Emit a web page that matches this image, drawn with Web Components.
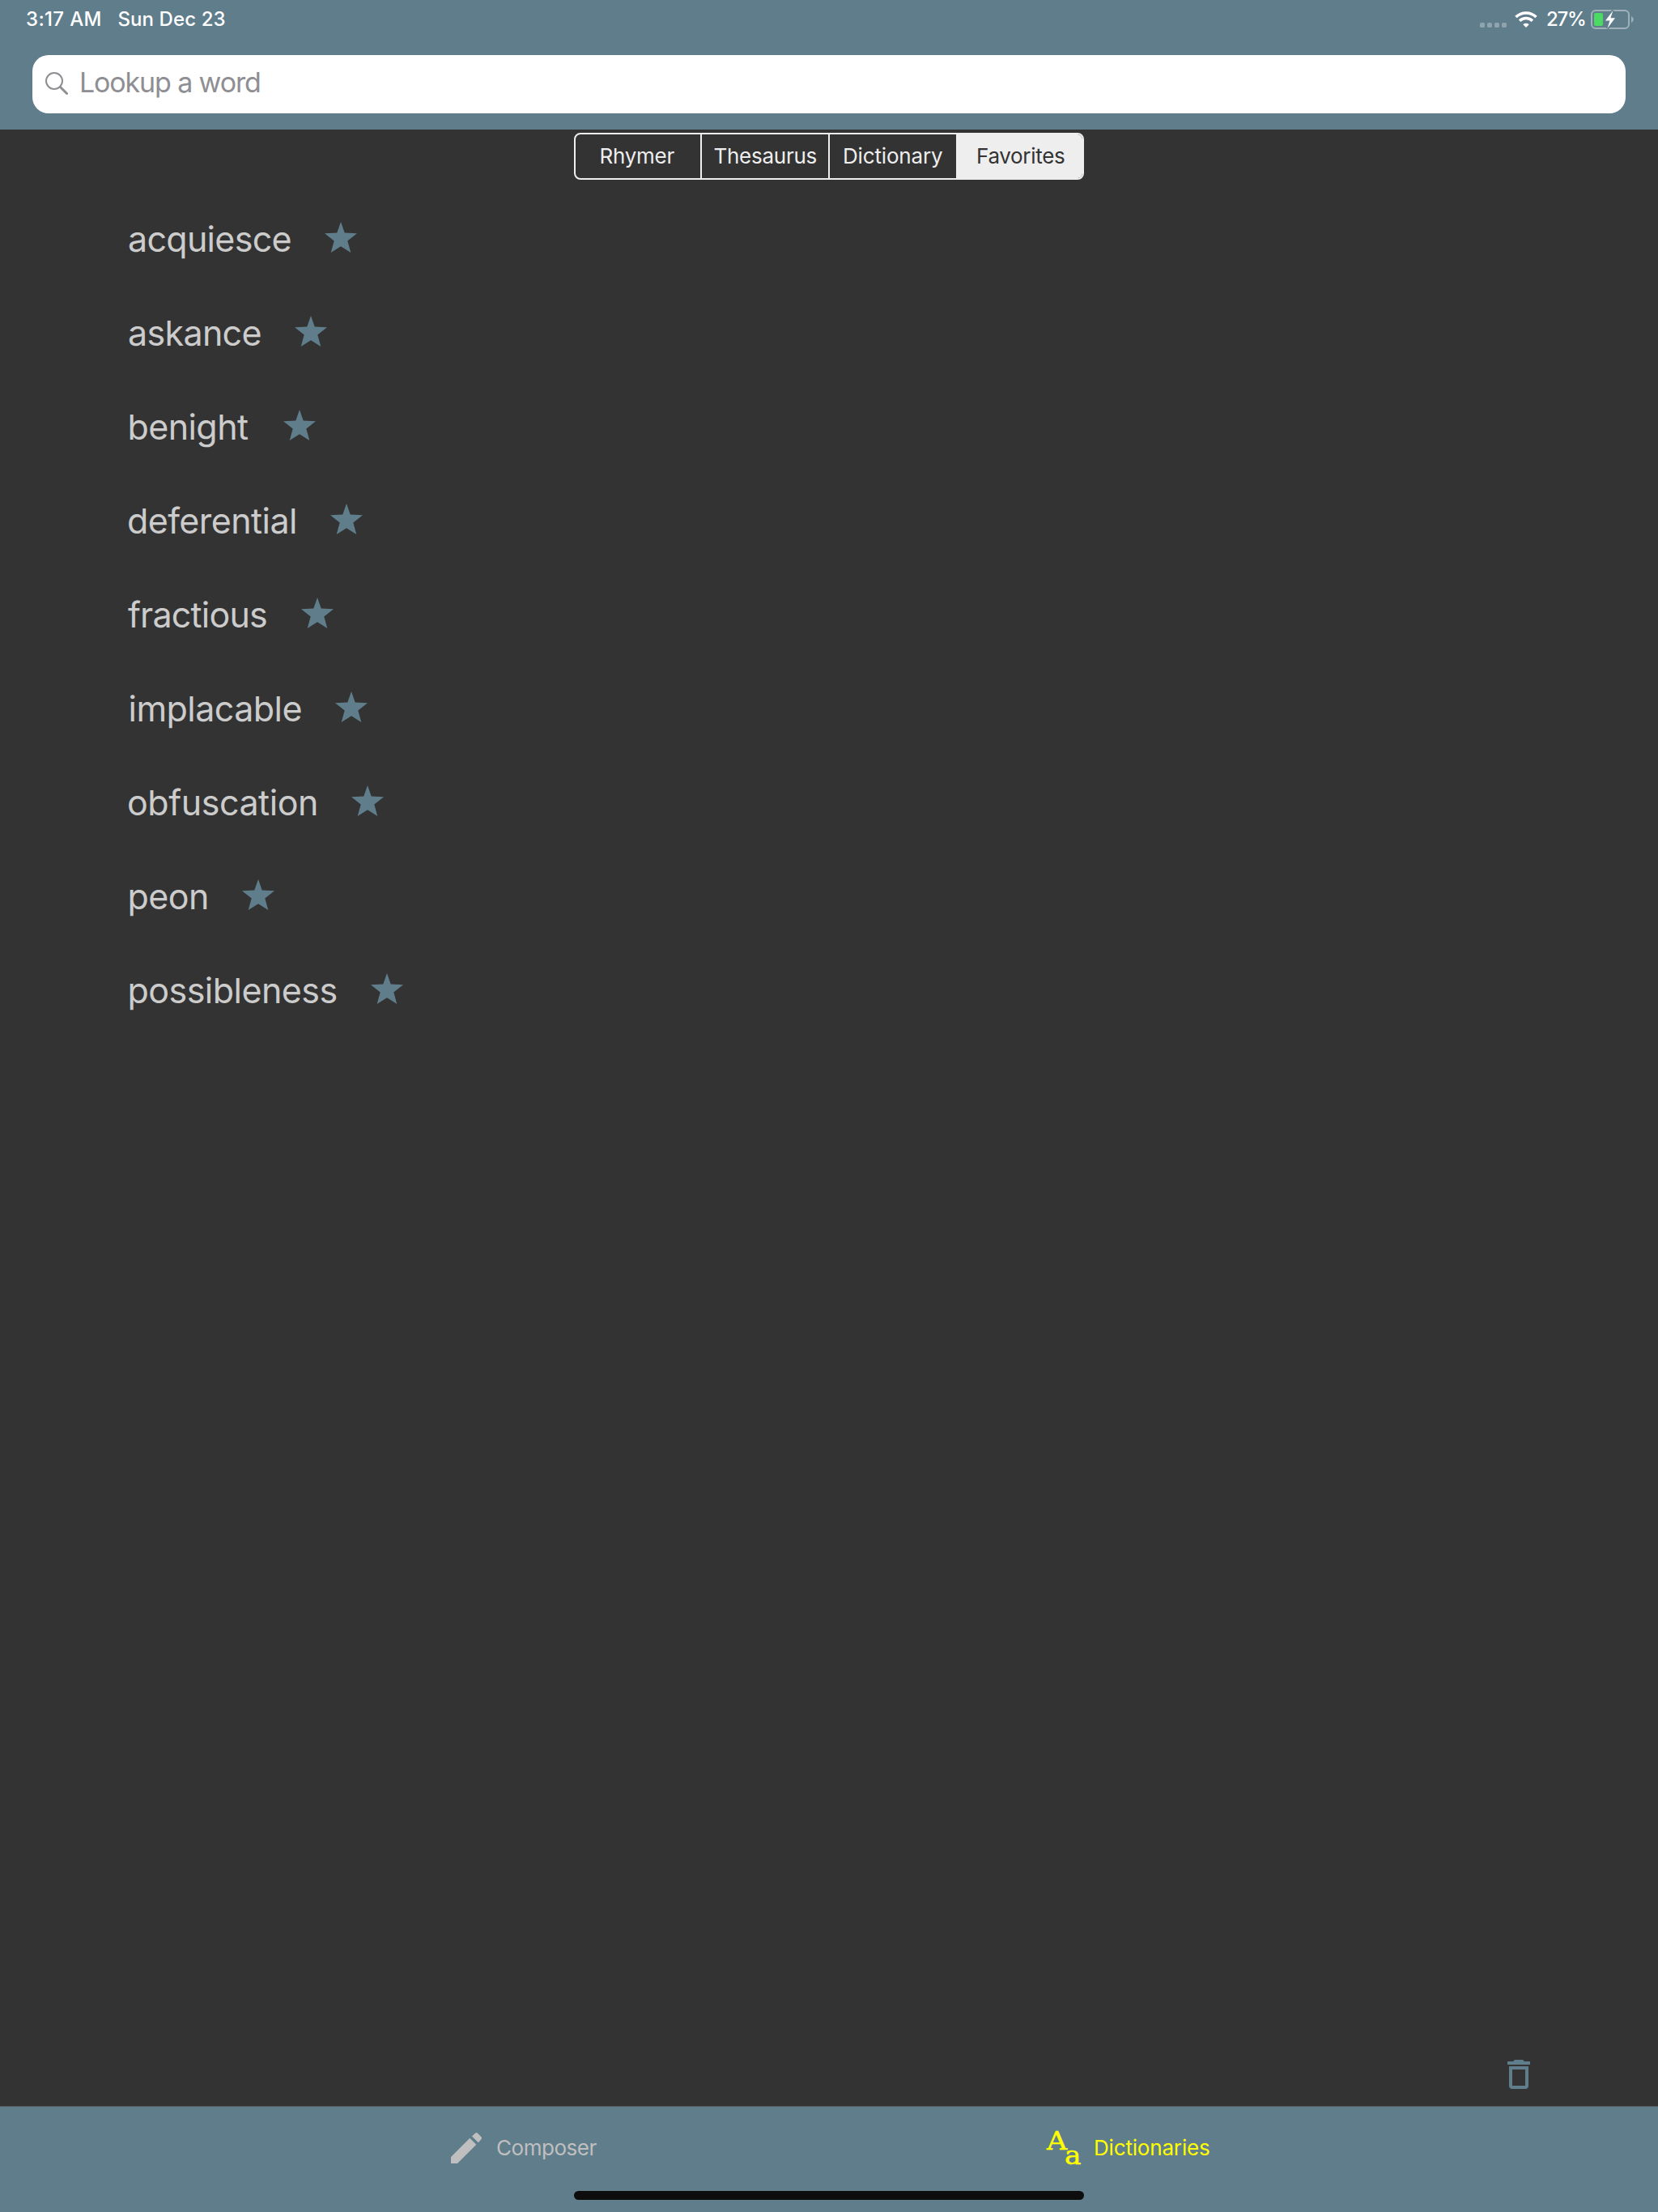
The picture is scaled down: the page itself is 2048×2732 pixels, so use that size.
<!DOCTYPE html>
<html lang="en">
<head>
<meta charset="utf-8">
<title>Favorites</title>
<style>
html, body { margin: 0; height: 100%; }
body { font-family: Inter, "Liberation Sans", sans-serif; background: #333; }
</style>
</head>
<body>
<favorites-app></favorites-app>
<script>
const define = (name, html, setup) => customElements.define(name, class extends HTMLElement {
  connectedCallback() {
    if (this.shadowRoot) return;
    const t = document.createElement('template');
    t.innerHTML = html;
    this.attachShadow({ mode: 'open' }).append(t.content.cloneNode(true));
    if (setup) setup(this, this.shadowRoot);
  }
});

/* A one-line label whose tracking is adjusted so that it spans the given width. */
const pen = document.createElement('canvas').getContext('2d');
define('tracked-label', `
<style>
:host { display: block; flex: none; white-space: nowrap; line-height: 1.25; }
span { display: block; }
</style><span><slot></slot></span>`, (host, root) => {
  const text = host.textContent, target = +host.getAttribute('span');
  const cs = getComputedStyle(host);
  pen.font = `${cs.fontWeight} ${cs.fontSize} ${cs.fontFamily}`;
  const m = pen.measureText(text);
  const natural = m.actualBoundingBoxLeft + m.actualBoundingBoxRight;
  const span = root.querySelector('span');
  host.style.width = target + 'px';
  span.style.letterSpacing = (target - natural) / (text.length - 1) + 'px';
  span.style.marginLeft = m.actualBoundingBoxLeft + 'px';
});

define('status-bar', `
<style>
:host { display: flex; align-items: center; height: 47px; padding: 0 30px 0 33px; color: #fff; font-size: 24px; font-weight: 500; box-sizing: border-box; }
.date { margin-left: 23px; }
.dots { margin-left: auto; }
.wifi { margin: 1px 12px 0 10px; }
.battery { margin: 1px 0 0 7px; }
svg { display: block; flex: none; }
</style>
<tracked-label span="90.5">3:17 AM</tracked-label>
<tracked-label class="date" span="131">Sun Dec 23</tracked-label>
<svg class="dots" width="33" height="6" viewBox="0 0 33 6" style="margin-top:15px" fill="#8fa4ae"><rect width="6" height="6" rx="1.8"/><rect x="9" width="6" height="6" rx="1.8"/><rect x="18" width="6" height="6" rx="1.8"/><rect x="27" width="6" height="6" rx="1.8"/></svg>
<svg class="wifi" width="28" height="20" viewBox="0 0 28 20" fill="none" stroke="#fff" stroke-width="3.5"><path d="M1.5 7.1a17.8 17.8 0 0 1 25 0"/><path d="M6.1 11.8a11.2 11.2 0 0 1 15.8 0"/><path d="M14 20l-3.7-3.8a5.4 5.4 0 0 1 7.4 0z" fill="#fff" stroke="none"/></svg>
<tracked-label span="47">27%</tracked-label>
<svg class="battery" width="53" height="24" viewBox="0 0 53 24"><rect x="1" y="1" width="46" height="22" rx="5" fill="none" stroke="#a0b1b9" stroke-width="2"/><path d="M50 8c3.5 1.4 3.5 6.6 0 8z" fill="#a0b1b9"/><rect x="4" y="4" width="11" height="16" rx="2" fill="#4cd964"/><path d="M27.5 1L18 13.5h5.5L20.5 23 30 10.2h-5.6z" fill="#fff" stroke="#607d8b" stroke-width="3.5" paint-order="stroke"/></svg>`);

define('search-field', `
<style>
:host { display: flex; align-items: flex-start; height: 72px; box-sizing: border-box; border-radius: 20px; background: #fff; color: #8e8e93; font-size: 34px; padding: 13px 0 0 16px; }
svg { display: block; margin: 8px 16px 0 0; }
</style>
<svg width="28" height="28" viewBox="0 0 28 28" fill="none" stroke="#8e8e93"><circle cx="11" cy="11" r="10" stroke-width="2"/><path d="M18.5 18.5l8 8" stroke-width="3" stroke-linecap="round"/></svg>
<tracked-label span="221">Lookup a word</tracked-label>`);

define('scope-tab', `
<style>
:host { display: flex; flex: none; width: 158px; box-sizing: border-box; align-items: center; justify-content: center; border-left: 2px solid #eee; color: #eee; padding-left: 1px; }
:host([first]) { width: 154px; border-left: 0; padding-left: 0; }
:host([selected]) { width: 156px; background: #eee; color: #333; padding-left: 3px; }
</style><slot></slot>`);

define('scope-control', `
<style>
:host { display: flex; width: 630px; height: 58px; box-sizing: border-box; border: 2px solid #eee; border-radius: 8px; overflow: hidden; font-size: 26px; }
</style>
<scope-tab first><tracked-label span="91">Rhymer</tracked-label></scope-tab>
<scope-tab><tracked-label span="126">Thesaurus</tracked-label></scope-tab>
<scope-tab><tracked-label span="121">Dictionary</tracked-label></scope-tab>
<scope-tab selected><tracked-label span="107">Favorites</tracked-label></scope-tab>`);

define('favorite-word', `
<style>
:host { display: flex; align-items: center; height: 116px; color: #ccc; font-size: 43px; }
svg { display: block; margin: -7px 0 0 42.5px; }
</style><slot></slot>
<svg width="40" height="38" viewBox="0 0 40 38" fill="#607d8b"><path d="M20 0l4.7 13.6L40 14.2 28.3 23.5 32.3 38 20 30.3 7.7 38l4-14.5L0 14.2l15.3-.6z"/></svg>`);

define('nav-tab', `
<style>
:host { display: flex; align-items: center; height: 101px; gap: 19px; font-size: 26px; }
::slotted(tracked-label) { padding-top: 2px; }
</style><slot></slot>`);

define('letters-icon', `
<style>
:host { display: block; width: 42px; height: 42px; }
svg { display: block; overflow: visible; font-family: "DejaVu Serif", serif; }
</style>
<svg width="42" height="42" viewBox="0 0 42 42" fill="#ff0" stroke="#ff0" stroke-width=".5"><text x="0" y="22.7" font-size="31" textLength="25" lengthAdjust="spacingAndGlyphs">A</text><text x="22" y="41" font-size="32" textLength="20.5" lengthAdjust="spacingAndGlyphs">a</text></svg>`);

define('bottom-bar', `
<style>
:host { display: block; flex: none; height: 131px; box-sizing: border-box; border-top: 1px solid #555; background: #607d8b; }
nav { display: flex; height: 104px; }
.composer { width: 736px; padding-left: 557px; color: #bfbfbf; }
.dict { color: #ff0; gap: 18px; }
.home { width: 630px; height: 11px; border-radius: 6px; background: #0d0d0d; margin: 0 auto; }
svg { display: block; }
</style>
<nav>
<nav-tab class="composer"><svg width="38" height="38" viewBox="0 0 38 38" fill="#bfbfbf"><path d="M0 30L23.3 6.7l8 8L8 38H0zM26 4.6l3.7-3.7a2.5 2.5 0 0 1 3.5 0l4 4a2.5 2.5 0 0 1 0 3.5L33.8 12.200z"/></svg><tracked-label span="123.5">Composer</tracked-label></nav-tab>
<nav-tab class="dict"><letters-icon></letters-icon><tracked-label span="141">Dictionaries</tracked-label></nav-tab>
</nav>
<div class="home"></div>`);

define('favorites-app', `
<style>
:host { display: flex; flex-direction: column; width: 2048px; height: 2732px; overflow: hidden; background: #333; }
header { flex: none; height: 160px; background: #607d8b; }
search-field { margin: 21px 40px 0; }
scope-control { flex: none; align-self: center; margin-top: 4px; }
main { flex: 1; padding: 16px 0 0 158px; }
.tools { display: flex; justify-content: flex-end; padding: 0 158px 21px 0; }
</style>
<header><status-bar></status-bar><search-field></search-field></header>
<scope-control></scope-control>
<main></main>
<div class="tools"><svg width="28" height="36" viewBox="0 0 28 36" fill="#607d8b"><path d="M0 2h7l2-2h10l2 2h7v4H0z"/><path fill-rule="evenodd" d="M2 8h24v24a4 4 0 0 1-4 4H6a4 4 0 0 1-4-4zM6 12v20h16V12z"/></svg></div>
<bottom-bar></bottom-bar>`, (host, root) => {
  /* word, text width, optical indent of its first letter */
  const words = [['acquiesce', 199.5, 1], ['askance', 162.5, 1], ['benight', 146.5, 2.5], ['deferential', 206, 1], ['fractious', 171, 0], ['implacable', 211, 2.5], ['obfuscation', 232, 1], ['peon', 95.5, 2.5], ['possibleness', 255, 2.5]];
  root.querySelector('main').innerHTML = words.map(([w, s, i]) => `<favorite-word style="padding-left:${i}px"><tracked-label span="${s}">${w}</tracked-label></favorite-word>`).join('');
});
</script>
</body>
</html>
